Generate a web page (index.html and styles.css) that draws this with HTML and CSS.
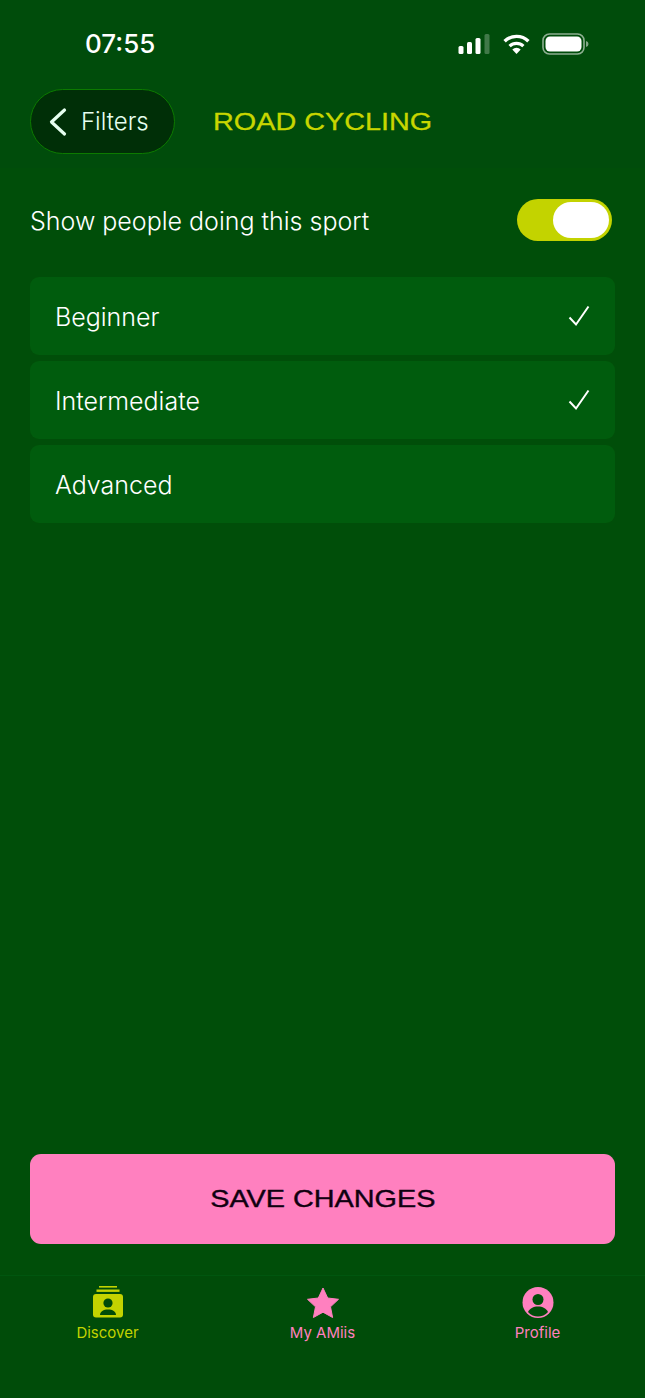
FILE: index.html
```html
<!DOCTYPE html>
<html lang="en">
<head>
    <meta charset="UTF-8">
    <meta name="viewport" content="width=device-width, initial-scale=1.0">
    <title>Road Cycling</title>
    <link rel="stylesheet" href="styles.css">
</head>
<body>

<div class="screen">
    <div class="top">
        <div class="status">
            <span class="time">07:55</span>
            <div class="status-icons">
                <svg width="33" height="22" viewBox="0 0 33 22">
                    <rect x="0.500" y="13" width="5" height="8" rx="1.5" fill="#fff"/>
                    <rect x="9" y="9" width="5" height="12" rx="1.5" fill="#fff"/>
                    <rect x="17.500" y="5" width="5" height="16" rx="1.5" fill="#fff"/>
                    <rect x="26.500" y="1" width="5" height="20" rx="1.5" fill="#fff" opacity="0.25"/>
                </svg>
                <svg width="29" height="22" viewBox="0 0 29 22">
                    <path d="M14.5 21l-4.200-4.600a6 6 0 0 1 8.400 0z" fill="#fff"/>
                    <path d="M7.600 13.200a10 10 0 0 1 13.800 0" fill="none" stroke="#fff" stroke-width="3.200"/>
                    <path d="M2.600 8.200a17 17 0 0 1 23.800 0" fill="none" stroke="#fff" stroke-width="3.400"/>
                </svg>
                <svg width="47" height="22" viewBox="0 0 47 22">
                    <rect x="1" y="1" width="41" height="20" rx="6.500" fill="none" stroke="#fff" stroke-opacity="0.55" stroke-width="1.600"/>
                    <rect x="3.500" y="3.500" width="36" height="15" rx="4.500" fill="#fff"/>
                    <path d="M44 8v6a3 3 0 0 0 2.500-3 3 3 0 0 0-2.500-3z" fill="#fff" fill-opacity="0.5"/>
                </svg>
            </div>
        </div>
        <div class="header">
            <a class="back">
                <svg width="20" height="30" viewBox="0 0 20 30">
                    <path d="M16.500 3L3.500 15l13 12" fill="none" stroke="#e6fff0" stroke-width="3.200" stroke-linecap="round" stroke-linejoin="round"/>
                </svg>
                <span>Filters</span>
            </a>
            <h1><span class="wide">ROAD CYCLING</span></h1>
        </div>
    </div>

    <div class="content">
        <div class="toggle-row">
            <span class="toggle-label">Show people doing this sport</span>
            <div class="toggle"><div class="knob"></div></div>
        </div>

        <ul class="levels">
            <li><span class="level-name">Beginner</span>
                <svg width="22" height="22" viewBox="0 0 22 22"><path d="M1.500 12.500L8 19.500 20.500 1.500" fill="none" stroke="#fff" stroke-width="2"/></svg>
            </li>
            <li><span class="level-name">Intermediate</span>
                <svg width="22" height="22" viewBox="0 0 22 22"><path d="M1.500 12.500L8 19.500 20.500 1.500" fill="none" stroke="#fff" stroke-width="2"/></svg>
            </li>
            <li><span class="level-name">Advanced</span></li>
        </ul>

        <button class="save"><span class="wide">SAVE CHANGES</span></button>
    </div>

    <div class="tabs">
        <div class="tab active">
            <svg width="32" height="32" viewBox="0 0 32 32">
                <rect x="7" y="0" width="18" height="1.600" fill="#c3d300"/>
                <rect x="4.500" y="3.500" width="23" height="2.400" fill="#c3d300"/>
                <rect x="1" y="8" width="30" height="23.500" rx="3" fill="#c3d300"/>
                <circle cx="16" cy="17" r="4.600" fill="#004c09"/>
                <path d="M8 29c0-3.500 3.500-5.500 8-5.500s8 2 8 5.500z" fill="#004c09"/>
            </svg>
            <span>Discover</span>
        </div>
        <div class="tab pink">
            <svg width="34" height="32" viewBox="0 0 34 32">
                <path d="M17 2l4.700 10 10.800 1.300-8 7.500 2.100 10.700L17 26.200 7.400 31.500l2.100-10.700-8-7.500L12.300 12z" fill="#ff80bf" stroke="#ff80bf" stroke-linejoin="round"/>
            </svg>
            <span>My AMiis</span>
        </div>
        <div class="tab pink">
            <svg width="32" height="32" viewBox="0 0 32 32">
                <circle cx="16" cy="16.500" r="15.500" fill="#ff80bf"/>
                <circle cx="16" cy="13.500" r="5.500" fill="#004c09"/>
                <path d="M6 26c1.500-3.500 5.500-5.500 10-5.500s8.500 2 10 5.500c-2.500 3-6.500 4.500-10 4.500S8.500 29 6 26z" fill="#004c09"/>
            </svg>
            <span>Profile</span>
        </div>
    </div>
</div>

</body>
</html>
```

FILE: styles.css
```css
* {
    box-sizing: border-box;
}
body {
    margin: 0;
    background-color: #004c09;
    font-family: Inter, Arial, sans-serif;
    font-weight: 300;
    color: white;
}
.screen {
    width: 645px;
    height: 1398px;
    display: flex;
    flex-direction: column;
}
.top {
    height: 168px;
    background-color: #004c0b;
    padding: 0 30px;
}
.status {
    height: 89px;
    display: flex;
    justify-content: space-between;
    align-items: center;
    padding: 0 26px 2px 55px;
}
.time {
    font-size: 26px;
    font-weight: 500;
}
.status-icons {
    display: flex;
    align-items: center;
    gap: 11px;
}
.header {
    display: flex;
    align-items: center;
    gap: 38px;
}
.back {
    width: 145px;
    height: 65px;
    display: flex;
    align-items: center;
    gap: 13px;
    padding-left: 17px;
    background-color: #002f07;
    border: 1px solid #0c7a00;
    border-radius: 33px;
    color: #e6fff0;
    font-size: 24px;
}
h1 {
    margin: 0;
    font-family: "Liberation Sans", Arial, sans-serif;
    font-size: 24px;
    font-weight: 400;
    color: #c8d600;
    -webkit-text-stroke: 0.3px #c8d600;
}
.wide {
    display: inline-block;
    transform: scaleX(1.2);
    transform-origin: left center;
}
.content {
    flex: 1;
    display: flex;
    flex-direction: column;
    padding: 0 30px;
    background-color: #004e09;
}
.toggle-row {
    display: flex;
    justify-content: space-between;
    align-items: center;
    height: 105px;
    padding: 0 3px 2px 0;
    font-size: 25px;
}
.toggle-label {
    padding-top: 2px;
}
.toggle {
    width: 95px;
    height: 42px;
    background-color: #c3d300;
    border-radius: 21px;
    padding: 3px;
    display: flex;
    justify-content: flex-end;
}
.knob {
    width: 56px;
    height: 36px;
    background-color: white;
    border-radius: 18px;
}
.levels {
    list-style: none;
    margin: 4px 0 0;
    padding: 0;
    display: flex;
    flex-direction: column;
    gap: 6px;
}
.levels li {
    height: 78px;
    display: flex;
    justify-content: space-between;
    align-items: center;
    padding: 0 25px;
    background-color: #005c0d;
    border-radius: 9px;
    font-size: 25px;
}
.level-name {
    padding-top: 2px;
}
.save {
    margin-top: auto;
    margin-bottom: 31px;
    height: 90px;
    background-color: #ff80bf;
    border: none;
    border-radius: 11px;
    font-family: "Liberation Sans", Arial, sans-serif;
    font-size: 24px;
    color: #100010;
    -webkit-text-stroke: 0.4px #100010;
}
.save .wide {
    transform-origin: center;
}
.tabs {
    height: 123px;
    display: flex;
    background-color: #004c09;
    border-top: 1px solid #00560f;
}
.tab {
    flex: 1;
    display: flex;
    flex-direction: column;
    align-items: center;
    padding-top: 10px;
    gap: 5px;
    font-size: 15px;
    font-weight: 400;
    color: #c3d300;
}
.tab.pink {
    color: #ff80bf;
}
```
